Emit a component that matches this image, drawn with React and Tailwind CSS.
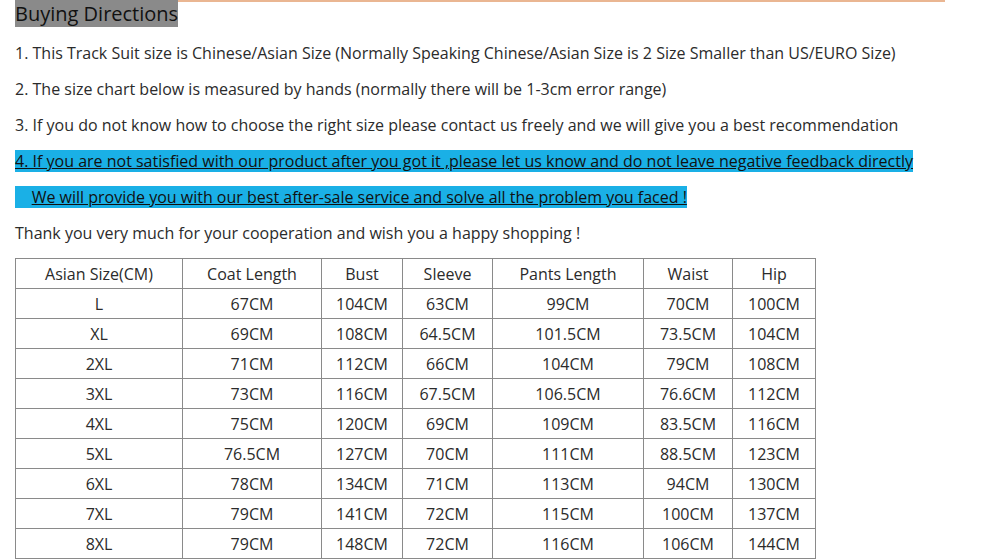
import React from 'react';

const headers = ['Asian Size(CM)', 'Coat Length', 'Bust', 'Sleeve', 'Pants Length', 'Waist', 'Hip'];
const widths = ['w-[167px]', 'w-[139px]', 'w-[81px]', 'w-[90px]', 'w-[151px]', 'w-[89px]', 'w-[83px]'];

const rows = [
  ['L', '67CM', '104CM', '63CM', '99CM', '70CM', '100CM'],
  ['XL', '69CM', '108CM', '64.5CM', '101.5CM', '73.5CM', '104CM'],
  ['2XL', '71CM', '112CM', '66CM', '104CM', '79CM', '108CM'],
  ['3XL', '73CM', '116CM', '67.5CM', '106.5CM', '76.6CM', '112CM'],
  ['4XL', '75CM', '120CM', '69CM', '109CM', '83.5CM', '116CM'],
  ['5XL', '76.5CM', '127CM', '70CM', '111CM', '88.5CM', '123CM'],
  ['6XL', '78CM', '134CM', '71CM', '113CM', '94CM', '130CM'],
  ['7XL', '79CM', '141CM', '72CM', '115CM', '100CM', '137CM'],
  ['8XL', '79CM', '148CM', '72CM', '116CM', '106CM', '144CM'],
];

function Cell({ children }) {
  return (
    <td className="h-[30px] p-0 border border-[#8a8a8a] text-center align-middle">{children}</td>
  );
}

export default function App() {
  return (
    <div className="min-h-screen bg-white text-[#2b2b2b] text-[16px] font-['Open_Sans',sans-serif]">
      <div className="flex items-start">
        <h2 className="ml-[15px] h-[27px] leading-[27px] bg-[#8a8a8a] text-[#111] text-[20px] whitespace-nowrap">
          Buying Directions
        </h2>
        <div className="h-[2px] w-[767px] bg-[#eab692]" />
      </div>

      <div className="pl-[15px] pt-[8px]">
        <p className="h-[36px] leading-[36px]">
          1. This Track Suit size is Chinese/Asian Size (Normally Speaking Chinese/Asian Size is 2 Size Smaller than US/EURO Size)
        </p>
        <p className="h-[36px] leading-[36px]">
          2. The size chart below is measured by hands (normally there will be 1-3cm error range)
        </p>
        <p className="h-[36px] leading-[36px]">
          3. If you do not know how to choose the right size please contact us freely and we will give you a best recommendation
        </p>
        <p className="h-[36px] leading-[36px] text-[#111]">
          <span className="bg-[#1ab0e6] underline">
            4. If you are not satisfied with our product after you got it ,please let us know and do not leave negative feedback directly
          </span>
        </p>
        <p className="h-[36px] leading-[36px] text-[#111]">
          <span className="bg-[#1ab0e6]">
            {'\u00a0\u00a0\u00a0\u00a0'}
            <span className="underline">We will provide you with our best after-sale service and solve all the problem you faced !</span>
          </span>
        </p>
        <p className="h-[36px] leading-[36px]">
          Thank you very much for your cooperation and wish you a happy shopping !
        </p>

        <table className="mt-[7px] w-[800px] table-fixed border-collapse border border-[#333]">
          <colgroup>
            {widths.map((w, i) => (
              <col key={i} className={w} />
            ))}
          </colgroup>
          <tbody>
            <tr>
              {headers.map((h) => (
                <Cell key={h}>{h}</Cell>
              ))}
            </tr>
            {rows.map((r) => (
              <tr key={r[0]}>
                {r.map((v, i) => (
                  <Cell key={i}>{v}</Cell>
                ))}
              </tr>
            ))}
          </tbody>
        </table>
      </div>
    </div>
  );
}
